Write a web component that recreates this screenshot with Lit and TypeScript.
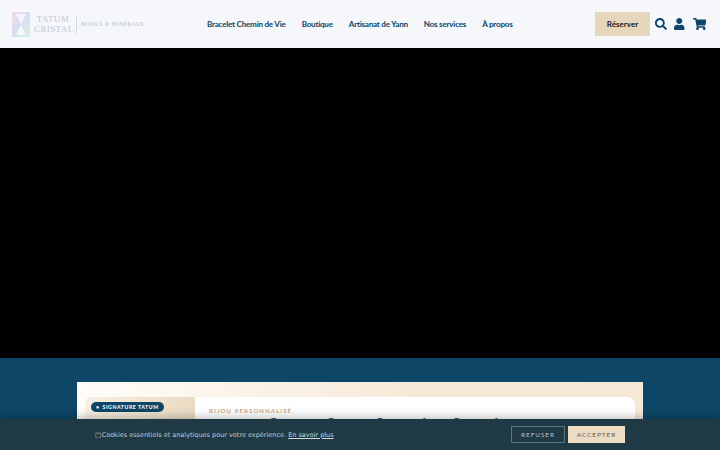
import { LitElement, html, css } from "lit";
import { customElement } from "lit/decorators.js";

@customElement("app-root")
export class AppRoot extends LitElement {
  static styles = css`
    :host { display: block; position: relative; height: 450px; overflow: hidden; background: #0d4666; font-family: "Lato", sans-serif; }
    .header { height: 48px; background: #f5f7fa; display: flex; align-items: center; padding: 0 14px 0 12px; box-sizing: border-box; }
    .logo { display: flex; align-items: center; width: 195px; flex: none; opacity: .5; }
    .mark { width: 18px; height: 25px; flex: none; margin-right: 4px; }
    .lname { font-family: "Liberation Serif", serif; font-size: 9px; line-height: 10.5px; color: #8d9aa6; letter-spacing: .4px; text-align: center; width: 38px; flex: none; }
    .lsep { width: 1px; height: 19px; background: #b9c2ca; margin: 0 4px; flex: none; }
    .lsub { font-family: "Liberation Serif", serif; font-weight: 700; font-size: 5.2px; letter-spacing: .45px; color: #9aa6b0; white-space: nowrap; }
    .nav { display: flex; gap: 16px; flex: 1; font-size: 8.1px; font-weight: 700; letter-spacing: -.24px; color: #0d4666; white-space: nowrap; }
    .reserve { width: 55px; height: 24px; background: #e6d6bb; color: #1a1a1a; font-size: 8px; font-weight: 700; display: flex; align-items: center; justify-content: center; flex: none; }
    .icons { display: flex; align-items: center; gap: 7px; margin-left: 5px; }
    .icons svg { display: block; fill: #0d4666; }
    .cart { margin-left: 1px; }
    .hero { height: 310px; background: #000; }
    .section { height: 92px; padding: 24px 77px 0; box-sizing: border-box; background: #0d4666; }
    .card { height: 100px; display: flex; padding: 15px 8px 0; box-sizing: border-box; background: linear-gradient(90deg, #fffdf9 0%, #f6e9d8 60%, #f5e8d6 100%); }
    .side { width: 110px; flex: none; display: flex; align-items: flex-start; padding: 5px 6px; box-sizing: border-box; background: linear-gradient(100deg, #f8efe2, #e8d9bf); border-radius: 6px 0 0 0; }
    .badge { display: inline-flex; align-items: center; gap: 3px; height: 10px; background: #0d4666; color: #f5f7fa; font-weight: 900; font-size: 5.2px; line-height: 6px; letter-spacing: .55px; padding: 0 5px; border-radius: 5px; white-space: nowrap; }
    .main { flex: 1; background: #fff; border-radius: 0 8px 0 0; padding: 10px 14px; min-width: 0; }
    .eyebrow { font-size: 6px; line-height: 7px; font-weight: 700; letter-spacing: 1.1px; color: #c8a97e; }
    .title { font-family: "Liberation Serif", serif; font-size: 24px; line-height: 24px; font-weight: 700; color: #4a5f6b; white-space: nowrap; }
    .cookie { position: absolute; left: 0; right: 0; bottom: 0; height: 31px; background: #1f3945; display: flex; align-items: center; justify-content: center; box-shadow: 0 -3px 8px rgba(0,0,0,.22); }
    .cinner { width: 530px; display: flex; align-items: center; }
    .ctext { flex: 1; font-family: "DejaVu Sans", sans-serif; font-size: 6.5px; color: #c3cbd0; white-space: nowrap; }
    .ctext a { color: #d3d9dd; text-decoration: underline; }
    .box { margin-right: -1.6px; }
    .btn { height: 17px; box-sizing: border-box; display: flex; align-items: center; justify-content: center; font-size: 6.5px; letter-spacing: .9px; }
    .refuse { width: 54px; border: 1px solid #5c7585; color: #b9c3ca; margin-right: 3px; }
    .accept { width: 57px; background: #eddcc3; color: #5a5a50; }
  `;

  render() {
    return html`
      <div class="header">
        <div class="logo">
          <svg class="mark" viewBox="0 0 18 24" preserveAspectRatio="none">
            <defs><linearGradient id="g" x1="0" y1="0" x2="1" y2="1">
              <stop offset="0" stop-color="#f3bdd0"/><stop offset=".5" stop-color="#b9c8f0"/><stop offset="1" stop-color="#b9ecd0"/>
            </linearGradient></defs>
            <path d="M0 0h18v24H0z M4 2l5 10-5 10h10l-5-10 5-10z" fill="url(#g)" fill-rule="evenodd"/>
          </svg>
          <div class="lname">TATUM<br />CRISTAL</div>
          <div class="lsep"></div>
          <div class="lsub">BIJOUX &amp; MINÉRAUX</div>
        </div>
        <nav class="nav">
          <span>Bracelet Chemin de Vie</span><span>Boutique</span><span>Artisanat de Yann</span><span>Nos services</span><span>À propos</span>
        </nav>
        <div class="reserve">Réserver</div>
        <div class="icons">
          <svg width="12" height="12" viewBox="0 0 512 512"><path d="M505 442.7L405.3 343c-4.5-4.5-10.6-7-17-7H372c27.6-35.3 44-79.7 44-128C416 93.1 322.9 0 208 0S0 93.1 0 208s93.1 208 208 208c48.3 0 92.7-16.4 128-44v16.3c0 6.4 2.5 12.5 7 17l99.7 99.7c9.4 9.4 24.6 9.4 33.9 0l28.3-28.3c9.4-9.4 9.4-24.6.1-34zM208 336c-70.7 0-128-57.2-128-128 0-70.7 57.2-128 128-128 70.7 0 128 57.2 128 128 0 70.7-57.2 128-128 128z"/></svg>
          <svg width="10.5" height="12" viewBox="0 0 448 512"><path d="M224 256c70.7 0 128-57.3 128-128S294.7 0 224 0 96 57.3 96 128s57.3 128 128 128zm89.6 32h-16.7c-22.2 10.2-46.9 16-72.9 16s-50.6-5.8-72.9-16h-16.7C60.2 288 0 348.2 0 422.4V464c0 26.5 21.5 48 48 48h352c26.5 0 48-21.5 48-48v-41.6c0-74.2-60.2-134.4-134.4-134.4z"/></svg>
          <svg class="cart" width="13.5" height="12" viewBox="0 0 576 512"><path d="M528.12 301.319l47.273-208C578.806 78.301 567.391 64 551.99 64H159.208l-9.166-44.81C147.758 8.021 137.93 0 126.529 0H24C10.745 0 0 10.745 0 24v16c0 13.255 10.745 24 24 24h69.883l70.248 343.435C147.325 417.1 136 435.222 136 456c0 30.928 25.072 56 56 56s56-25.072 56-56c0-15.674-6.447-29.835-16.824-40h209.647C430.447 426.165 424 440.326 424 456c0 30.928 25.072 56 56 56s56-25.072 56-56c0-22.172-12.888-41.332-31.579-50.405l5.517-24.276c3.413-15.018-8.002-29.319-23.403-29.319H218.117l-6.545-32h293.145c11.206 0 20.92-7.754 23.403-18.681z"/></svg>
        </div>
      </div>
      <div class="hero"></div>
      <div class="section">
        <div class="card">
          <div class="side"><span class="badge"><span>•</span><span>SIGNATURE TATUM</span></span></div>
          <div class="main">
            <div class="eyebrow">BIJOU PERSONNALISÉ</div>
            <div class="title">Votre bracelet Chemin de Vie</div>
          </div>
        </div>
      </div>
      <div class="cookie">
        <div class="cinner">
          <span class="ctext"><span class="box">□</span> Cookies essentiels et analytiques pour votre expérience. <a>En savoir plus</a></span>
          <div class="btn refuse">REFUSER</div>
          <div class="btn accept">ACCEPTER</div>
        </div>
      </div>
    `;
  }
}
